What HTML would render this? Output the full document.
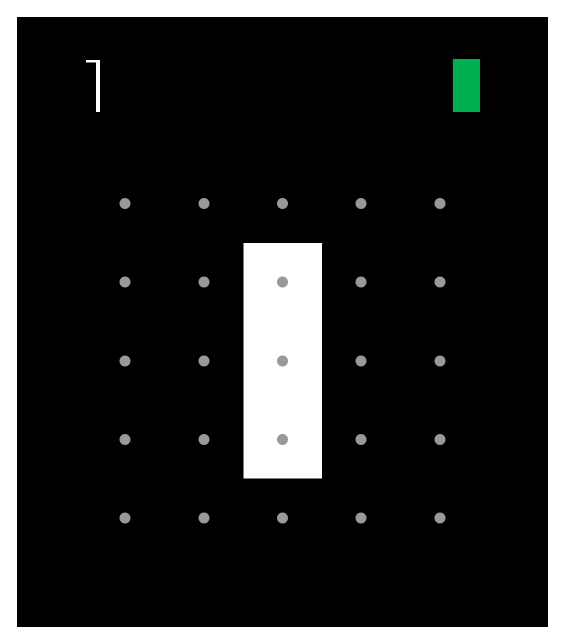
<!DOCTYPE html>
<html><head><style>
html,body{margin:0;padding:0;background:#fff;width:565px;height:644px;overflow:hidden}
</style></head><body>
<svg width="565" height="644" xmlns="http://www.w3.org/2000/svg" style="display:block">
<rect x="17" y="17" width="531" height="610" fill="#000"/>
<rect x="86" y="60" width="14" height="2.5" fill="#fff"/>
<rect x="96" y="60" width="4" height="52" fill="#fff"/>
<rect x="453" y="59" width="27" height="53" fill="#00b050"/>
<rect x="243.5" y="243" width="78.5" height="235.5" fill="#fff"/>
<g fill="#999">
<circle cx="125" cy="203.5" r="5.5"/><circle cx="204" cy="203.5" r="5.5"/><circle cx="282.5" cy="203.5" r="5.5"/><circle cx="361" cy="203.5" r="5.5"/><circle cx="440" cy="203.5" r="5.5"/>
<circle cx="125" cy="282" r="5.5"/><circle cx="204" cy="282" r="5.5"/><circle cx="282.5" cy="282" r="5.5"/><circle cx="361" cy="282" r="5.5"/><circle cx="440" cy="282" r="5.5"/>
<circle cx="125" cy="361" r="5.5"/><circle cx="204" cy="361" r="5.5"/><circle cx="282.5" cy="361" r="5.5"/><circle cx="361" cy="361" r="5.5"/><circle cx="440" cy="361" r="5.5"/>
<circle cx="125" cy="439.5" r="5.5"/><circle cx="204" cy="439.5" r="5.5"/><circle cx="282.5" cy="439.5" r="5.5"/><circle cx="361" cy="439.5" r="5.5"/><circle cx="440" cy="439.5" r="5.5"/>
<circle cx="125" cy="518" r="5.5"/><circle cx="204" cy="518" r="5.5"/><circle cx="282.5" cy="518" r="5.5"/><circle cx="361" cy="518" r="5.5"/><circle cx="440" cy="518" r="5.5"/>
</g>
</svg>
</body></html>
